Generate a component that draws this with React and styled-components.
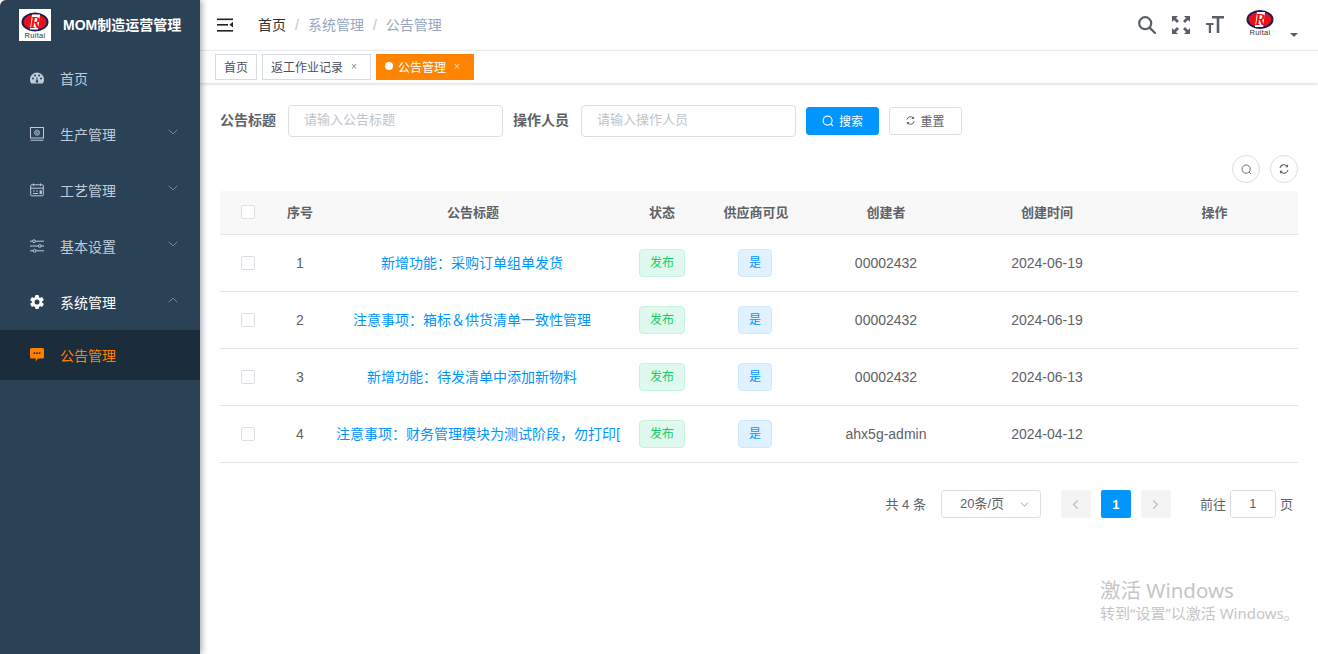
import React from "react";
import styled, { createGlobalStyle } from "styled-components";
import { ChevronDown, ChevronUp, ChevronLeft, ChevronRight } from "lucide-react";

const notices = [
  { id: 1, title: "新增功能：采购订单组单发货", creator: "00002432", date: "2024-06-19" },
  { id: 2, title: "注意事项：箱标＆供货清单一致性管理", creator: "00002432", date: "2024-06-19" },
  { id: 3, title: "新增功能：待发清单中添加新物料", creator: "00002432", date: "2024-06-13" },
  { id: 4, title: "注意事项：财务管理模块为测试阶段，勿打印[", creator: "ahx5g-admin", date: "2024-04-12", long: true },
];

const GlobalStyle = createGlobalStyle`
  html, body {
    margin: 0;
    height: 100%;
    background: #fff;
    overflow: hidden;
  }
  body {
    font-family: "Liberation Sans", "Noto Sans CJK SC", sans-serif;
    font-size: 14px;
    color: #606266;
  }
  #root { height: 100%; }
  * { box-sizing: border-box; }
`;

const sideBg = "#2b4156";
const subBg = "#1b2c3b";

const Shell = styled.div`
  display: flex;
  height: 654px;
  width: 1318px;
  overflow: hidden;
  border-radius: 6px 8px 0 0;
  position: relative;
`;

const Sidebar = styled.aside`
  width: 200px;
  flex: none;
  background: ${sideBg};
  box-shadow: 2px 0 6px rgba(0, 21, 41, 0.35);
  z-index: 2;
`;

const Brand = styled.div`
  height: 50px;
  display: flex;
  align-items: center;
  padding-left: 19px;
  gap: 12px;
`;

const BrandLogo = styled.div`
  width: 32px;
  height: 32px;
  background: #fff;
  display: flex;
  align-items: center;
  justify-content: center;
`;

const BrandTitle = styled.h1`
  margin: -2px 0 0;
  font-size: 14px;
  font-weight: 700;
  color: #fff;
  white-space: nowrap;
`;

const MenuItem = styled.div`
  height: ${(p) => (p.$sub ? 50 : 56)}px;
  display: flex;
  align-items: center;
  padding: 0 19px 0 30px;
  gap: 16px;
  background: ${(p) => (p.$sub ? subBg : "transparent")};
  color: ${(p) => (p.$active ? "#ff8000" : p.$open ? "#fff" : "#bfcbd9")};
  svg.menu-icon { flex: none; }
`;

const MenuLabel = styled.span`
  flex: 1;
`;

const MenuArrow = styled.span`
  display: flex;
  color: #8292a3;
  margin-top: -4px;
`;

const Main = styled.main`
  flex: 1;
  min-width: 0;
  display: flex;
  flex-direction: column;
`;

const Navbar = styled.header`
  height: 51px;
  flex: none;
  display: flex;
  align-items: center;
  padding: 0 20px 0 17px;
  border-bottom: 1px solid #f1f2f4;
`;

const Breadcrumb = styled.nav`
  display: flex;
  margin: 0 0 2px 25px;
  color: #97a8be;
`;

const Crumb = styled.span`
  color: ${(p) => (p.$home ? "#303133" : "#97a8be")};
`;

const CrumbSep = styled.span`
  margin: 0 9px;
  padding-top: 3px;
  color: #c0c4cc;
`;

const NavTools = styled.div`
  margin-left: auto;
  display: flex;
  align-items: center;
  gap: 16px;
  color: #5a5e66;
`;

const Avatar = styled.div`
  position: relative;
  width: 58px;
  height: 30px;
  svg { display: block; margin-left: 5px; }
`;

const Caret = styled.span`
  position: absolute;
  right: 0;
  bottom: 3px;
  width: 0;
  height: 0;
  border-left: 4px solid transparent;
  border-right: 4px solid transparent;
  border-top: 4px solid #5a5e66;
`;

const TagsBar = styled.div`
  height: 32px;
  flex: none;
  display: flex;
  gap: 5px;
  padding: 3px 0 0 15px;
  box-shadow: 0 1px 3px rgba(0, 0, 0, 0.16);
  z-index: 1;
`;

const Tag = styled.div`
  height: 26px;
  display: flex;
  align-items: center;
  padding: 0 8px 2px;
  font-size: 12px;
  border: 1px solid ${(p) => (p.$active ? "#ff8400" : "#d8dce5")};
  background: ${(p) => (p.$active ? "#ff8400" : "#fff")};
  color: ${(p) => (p.$active ? "#fff" : "#495060")};
`;

const TagDot = styled.i`
  width: 8px;
  height: 8px;
  border-radius: 50%;
  background: #fff;
  margin-right: 5px;
`;

const TagClose = styled.span`
  font-size: 10px;
  margin-left: 8px;
  margin-right: 5px;
  opacity: 0.7;
`;

const Content = styled.section`
  padding: 22px 20px 0;
  position: relative;
`;

const SearchForm = styled.form`
  display: flex;
  align-items: center;
  height: 32px;
  margin: 0;
`;

const FieldLabel = styled.label`
  font-weight: 700;
  color: #606266;
  margin: 0 12px 5px 0;
  white-space: nowrap;
`;

const TextInput = styled.input`
  width: 215px;
  height: 32px;
  border: 1px solid #dcdfe6;
  border-radius: 4px;
  padding: 0 15px 4px;
  margin-right: 10px;
  font-family: inherit;
  font-size: 13px;
  outline: none;
  &::placeholder { color: #c0c4cc; opacity: 1; }
`;

const Button = styled.button`
  width: 73px;
  height: 28px;
  margin: 0 10px 0 0;
  display: flex;
  align-items: center;
  justify-content: center;
  gap: 5px;
  padding: 0 0 1px;
  font-family: inherit;
  font-size: 12px;
  border-radius: 3px;
  border: 1px solid ${(p) => (p.$primary ? "#0095ff" : "#dcdfe6")};
  background: ${(p) => (p.$primary ? "#0095ff" : "#fff")};
  color: ${(p) => (p.$primary ? "#fff" : "#606266")};
`;

const TableTools = styled.div`
  display: flex;
  justify-content: flex-end;
  gap: 10px;
  margin-top: 18px;
  height: 28px;
`;

const CircleButton = styled.button`
  width: 28px;
  height: 28px;
  padding: 0;
  border-radius: 50%;
  border: 1px solid #dcdfe6;
  background: #fff;
  display: flex;
  align-items: center;
  justify-content: center;
  color: #606266;
`;

const columns = "55px 50px 296px 82px 106px 154px 168px 167px";

const Table = styled.div`
  margin-top: 8px;
  width: 1078px;
`;

const Row = styled.div`
  display: grid;
  grid-template-columns: ${columns};
  height: ${(p) => (p.$head ? 44 : 57)}px;
  padding-bottom: ${(p) => (p.$head ? 2 : 0)}px;
  align-items: center;
  border-bottom: 1px solid #dfe6ec;
  background: ${(p) => (p.$head ? "#f8f8f9" : "#fff")};
  font-weight: ${(p) => (p.$head ? 700 : 400)};
  color: #606266;
  font-size: ${(p) => (p.$head ? 13 : 14)}px;
`;

const Cell = styled.div`
  text-align: center;
  white-space: nowrap;
  display: flex;
  justify-content: center;
  align-items: center;
`;

const TitleLink = styled.a`
  color: #0095ff;
  max-width: 284px;
  margin: 0 0 2px ${(p) => (p.$long ? 10 : -2)}px;
  overflow: hidden;
  white-space: nowrap;
`;

const Checkbox = styled.span`
  width: 14px;
  height: 14px;
  margin-left: 1px;
  border: 1px solid #dcdfe6;
  border-radius: 2px;
  background: #fff;
`;

const Badge = styled.span`
  height: 28px;
  display: inline-flex;
  align-items: center;
  padding: 0 10px 3px;
  margin-left: ${(p) => (p.$tone === "green" ? 0 : -2)}px;
  font-size: 12px;
  border-radius: 4px;
  border: 1px solid ${(p) => (p.$tone === "green" ? "#c5f3de" : "#cfe9fd")};
  background: ${(p) => (p.$tone === "green" ? "#e0f9ee" : "#e0f2ff")};
  color: ${(p) => (p.$tone === "green" ? "#13ce66" : "#0095ff")};
`;

const Pagination = styled.div`
  margin-top: 27px;
  height: 28px;
  display: flex;
  align-items: center;
  justify-content: flex-end;
  padding-right: 5px;
  font-size: 13px;
  color: #606266;
`;

const PageTotal = styled.span`
  padding-bottom: 2px;
`;

const PageSelect = styled.div`
  width: 100px;
  height: 28px;
  margin: 0 20px 0 15px;
  border: 1px solid #dcdfe6;
  border-radius: 3px;
  display: flex;
  align-items: center;
  justify-content: space-between;
  padding: 0 9px 3px 18px;
  color: #606266;
  svg { color: #c0c4cc; margin-top: 3px; }
`;

const PageButton = styled.span`
  width: 30px;
  height: 28px;
  margin-right: 10px;
  border-radius: 2px;
  display: flex;
  align-items: center;
  justify-content: center;
  font-weight: 700;
  background: ${(p) => (p.$current ? "#0095ff" : "#f4f4f5")};
  color: ${(p) => (p.$current ? "#fff" : "#c0c4cc")};
`;

const JumpBox = styled.div`
  display: flex;
  align-items: center;
  margin-left: 19px;
  gap: 4px;
  padding-bottom: 2px;
`;

const JumpInput = styled.span`
  width: 46px;
  height: 28px;
  margin-bottom: -2px;
  padding-bottom: 2px;
  border: 1px solid #dcdfe6;
  border-radius: 3px;
  display: flex;
  align-items: center;
  justify-content: center;
`;

const Watermark = styled.div`
  position: absolute;
  left: 1100px;
  top: 577px;
  color: #c6c6c6;
  z-index: 5;
  white-space: nowrap;
  font-family: "Noto Sans", "Noto Sans CJK SC", sans-serif;
`;

const WatermarkTitle = styled.div`
  font-size: 20.500px;
  line-height: 26px;
`;

const WatermarkHint = styled.div`
  font-size: 15px;
  line-height: 20px;
`;

const Logo = ({ width = 30, height = 26 }) => (
  <svg width={width} height={height} viewBox="0 0 30 26">
    <ellipse cx="15" cy="9.500" rx="12.500" ry="8.500" fill="#e8111a" stroke="#1c1a5c" strokeWidth="2" />
    <path d="M12 2 L20 2 L18 17 L10 17 Z" fill="#fff" />
    <text x="15" y="15" textAnchor="middle" fontSize="16" fontWeight="700" fontStyle="italic" fontFamily="Liberation Serif, serif" fill="#e8111a">R</text>
    <text x="15" y="25" textAnchor="middle" fontSize="7.500" letterSpacing="0.300" fontFamily="Liberation Sans, sans-serif" fill="#333">Ruitai</text>
  </svg>
);

const GaugeIcon = () => (
  <svg className="menu-icon" width="14" height="14" viewBox="0 0 14 14" fill="currentColor">
    <path d="M7 1.500a7 7 0 0 0-7 7c0 1.600.5 2.900 1.300 4h11.400c.8-1.100 1.300-2.400 1.300-4a7 7 0 0 0-7-7z" />
    <g fill={sideBg}>
      <circle cx="3" cy="7.500" r="1" /><circle cx="5" cy="4.500" r="1" /><circle cx="9.200" cy="4.500" r="1" /><circle cx="11" cy="7.500" r="1" />
      <path d="M6.300 10.500 6.700 6h.6l.4 4.500z" /><circle cx="7" cy="10.500" r="1.300" />
    </g>
  </svg>
);

const ProductionIcon = () => (
  <svg className="menu-icon" width="14" height="14" viewBox="0 0 14 14" fill="none" stroke="currentColor">
    <rect x="0.500" y="0.500" width="13" height="10.500" />
    <circle cx="7" cy="5.700" r="2.600" fill="currentColor" fillOpacity="0.450" strokeDasharray="1 0.600" />
    <path d="M0.500 13.200h13" />
  </svg>
);

const CraftIcon = () => (
  <svg className="menu-icon" width="14" height="14" viewBox="0 0 14 14" fill="none" stroke="currentColor">
    <rect x="0.700" y="1.800" width="12.600" height="11" rx="1" />
    <path d="M0.700 5.200h12.600M3.500 0.500v2.400M10.500 0.500v2.400" />
    <path d="M3 8h1.600M6.200 8h1.600M3 10.500h5" />
    <rect x="9.600" y="7.400" width="2.200" height="3.600" fill="currentColor" stroke="none" />
  </svg>
);

const SlidersIcon = () => (
  <svg className="menu-icon" width="14" height="14" viewBox="0 0 14 14" fill="none" stroke="currentColor">
    <path d="M0 2.200h14M0 7h14M0 11.800h14" />
    <circle cx="4" cy="2.200" r="1.400" fill={sideBg} />
    <circle cx="9.800" cy="7" r="1.400" fill={sideBg} />
    <circle cx="4.600" cy="11.800" r="1.400" fill={sideBg} />
  </svg>
);

const GearIcon = () => (
  <svg className="menu-icon" width="14" height="14" viewBox="0 0 14 14" fill="currentColor">
    <circle cx="7" cy="7" r="5.200" />
    {[0, 60, 120, 180, 240, 300].map((a) => (
      <rect key={a} x="5.100" y="0" width="3.800" height="3" rx="1" transform={`rotate(${a} 7 7)`} />
    ))}
    <circle cx="7" cy="7" r="2.500" fill={sideBg} />
  </svg>
);

const ChatIcon = () => (
  <svg className="menu-icon" width="14" height="14" viewBox="0 0 14 14" fill="currentColor">
    <path d="M1.500 0h11A1.500 1.500 0 0 1 14 1.500v7.500A1.500 1.500 0 0 1 12.500 10.500H8l-2.200 3v-3H1.500A1.500 1.500 0 0 1 0 9V1.500A1.500 1.500 0 0 1 1.500 0z" />
    <g fill={subBg}><rect x="3.600" y="4.400" width="1.600" height="1.600" /><rect x="6.200" y="4.400" width="1.600" height="1.600" /><rect x="8.800" y="4.400" width="1.600" height="1.600" /></g>
  </svg>
);

const HamburgerIcon = () => (
  <svg width="16" height="14" viewBox="0 0 16 14" fill="#222">
    <rect width="16" height="1.600" y="0.500" /><rect width="11" height="1.600" y="6" /><rect width="16" height="1.600" y="12" />
    <path d="M16 3.800v5.600L12.500 6.800z" />
  </svg>
);

const SearchGlyph = ({ size = 12, weight = 1.100 }) => (
  <svg width={size} height={size} viewBox="0 0 12 12" fill="none" stroke="currentColor" strokeWidth={weight}>
    <circle cx="5.600" cy="5.600" r="4.500" /><path d="M8.800 8.800 11 11" />
  </svg>
);

const RefreshGlyph = ({ size = 9 }) => (
  <svg width={size} height={size} viewBox="0 0 10 10" fill="none" stroke="currentColor" strokeWidth="1.100">
    <path d="M1 4a4 4 0 0 1 7-1.800M9 6a4 4 0 0 1-7 1.800" />
    <path d="M8.500.8v2H6.500M1.500 9.200v-2h2" />
  </svg>
);

const FullscreenIcon = () => (
  <svg width="18" height="18" viewBox="0 0 18 18" fill="currentColor">
    <path d="M0 0h6L4 2l3 3-2 2-3-3-2 2zM18 0v6l-2-2-3 3-2-2 3-3-2-2zM0 18v-6l2 2 3-3 2 2-3 3 2 2zM18 18h-6l2-2-3-3 2-2 3 3 2-2z" />
  </svg>
);

const FontSizeIcon = () => (
  <svg width="18" height="18" viewBox="0 0 18 18" fill="currentColor">
    <path d="M6 0h12v2.400h-4.700V17h-2.600V2.400H6z" />
    <path d="M0 7h7.500v2H5v8H2.800V9H0z" />
  </svg>
);

const NavSearchIcon = () => (
  <svg width="18" height="18" viewBox="0 0 18 18" fill="none" stroke="currentColor" strokeWidth="2.200">
    <circle cx="7.200" cy="7.200" r="6" /><path d="M11.600 11.600 17 17" strokeLinecap="round" />
  </svg>
);

const menu = [
  { label: "首页", Icon: GaugeIcon },
  { label: "生产管理", Icon: ProductionIcon, arrow: "down" },
  { label: "工艺管理", Icon: CraftIcon, arrow: "down" },
  { label: "基本设置", Icon: SlidersIcon, arrow: "down" },
  { label: "系统管理", Icon: GearIcon, arrow: "up", open: true },
];

const App = () => {
  return (
    <Shell>
      <GlobalStyle />
      <Sidebar>
        <Brand>
          <BrandLogo><Logo width={30} height={27} /></BrandLogo>
          <BrandTitle>MOM制造运营管理</BrandTitle>
        </Brand>
        {menu.map(({ label, Icon, arrow, open }) => (
          <MenuItem key={label} $open={open}>
            <Icon />
            <MenuLabel>{label}</MenuLabel>
            {arrow && (
              <MenuArrow>
                {arrow === "down" ? <ChevronDown size={16} strokeWidth={1.300} /> : <ChevronUp size={16} strokeWidth={1.300} />}
              </MenuArrow>
            )}
          </MenuItem>
        ))}
        <MenuItem $sub $active>
          <ChatIcon />
          <MenuLabel>公告管理</MenuLabel>
        </MenuItem>
      </Sidebar>
      <Main>
        <Navbar>
          <HamburgerIcon />
          <Breadcrumb>
            <Crumb $home>首页</Crumb>
            <CrumbSep>/</CrumbSep>
            <Crumb>系统管理</Crumb>
            <CrumbSep>/</CrumbSep>
            <Crumb>公告管理</Crumb>
          </Breadcrumb>
          <NavTools>
            <NavSearchIcon />
            <FullscreenIcon />
            <FontSizeIcon />
            <Avatar>
              <Logo />
              <Caret />
            </Avatar>
          </NavTools>
        </Navbar>
        <TagsBar>
          <Tag>首页</Tag>
          <Tag>返工作业记录<TagClose>×</TagClose></Tag>
          <Tag $active><TagDot />公告管理<TagClose>×</TagClose></Tag>
        </TagsBar>
        <Content>
          <SearchForm>
            <FieldLabel>公告标题</FieldLabel>
            <TextInput placeholder="请输入公告标题" />
            <FieldLabel>操作人员</FieldLabel>
            <TextInput placeholder="请输入操作人员" />
            <Button type="button" $primary><SearchGlyph />搜索</Button>
            <Button type="button"><RefreshGlyph />重置</Button>
          </SearchForm>
          <TableTools>
            <CircleButton type="button"><SearchGlyph size={11} weight={1} /></CircleButton>
            <CircleButton type="button"><RefreshGlyph size={10} /></CircleButton>
          </TableTools>
          <Table>
            <Row $head>
              <Cell><Checkbox /></Cell>
              <Cell>序号</Cell>
              <Cell>公告标题</Cell>
              <Cell>状态</Cell>
              <Cell>供应商可见</Cell>
              <Cell>创建者</Cell>
              <Cell>创建时间</Cell>
              <Cell>操作</Cell>
            </Row>
            {notices.map((n) => (
              <Row key={n.id}>
                <Cell><Checkbox /></Cell>
                <Cell>{n.id}</Cell>
                <Cell><TitleLink $long={n.long}>{n.title}</TitleLink></Cell>
                <Cell><Badge $tone="green">发布</Badge></Cell>
                <Cell><Badge $tone="blue">是</Badge></Cell>
                <Cell>{n.creator}</Cell>
                <Cell>{n.date}</Cell>
                <Cell />
              </Row>
            ))}
          </Table>
          <Pagination>
            <PageTotal>共 4 条</PageTotal>
            <PageSelect>20条/页<ChevronDown size={13} /></PageSelect>
            <PageButton><ChevronLeft size={15} strokeWidth={2.500} /></PageButton>
            <PageButton $current>1</PageButton>
            <PageButton><ChevronRight size={15} strokeWidth={2.500} /></PageButton>
            <JumpBox>前往<JumpInput>1</JumpInput>页</JumpBox>
          </Pagination>
        </Content>
      </Main>
      <Watermark>
        <WatermarkTitle>激活 Windows</WatermarkTitle>
        <WatermarkHint>转到“设置”以激活 Windows。</WatermarkHint>
      </Watermark>
    </Shell>
  );
};

export default App;
